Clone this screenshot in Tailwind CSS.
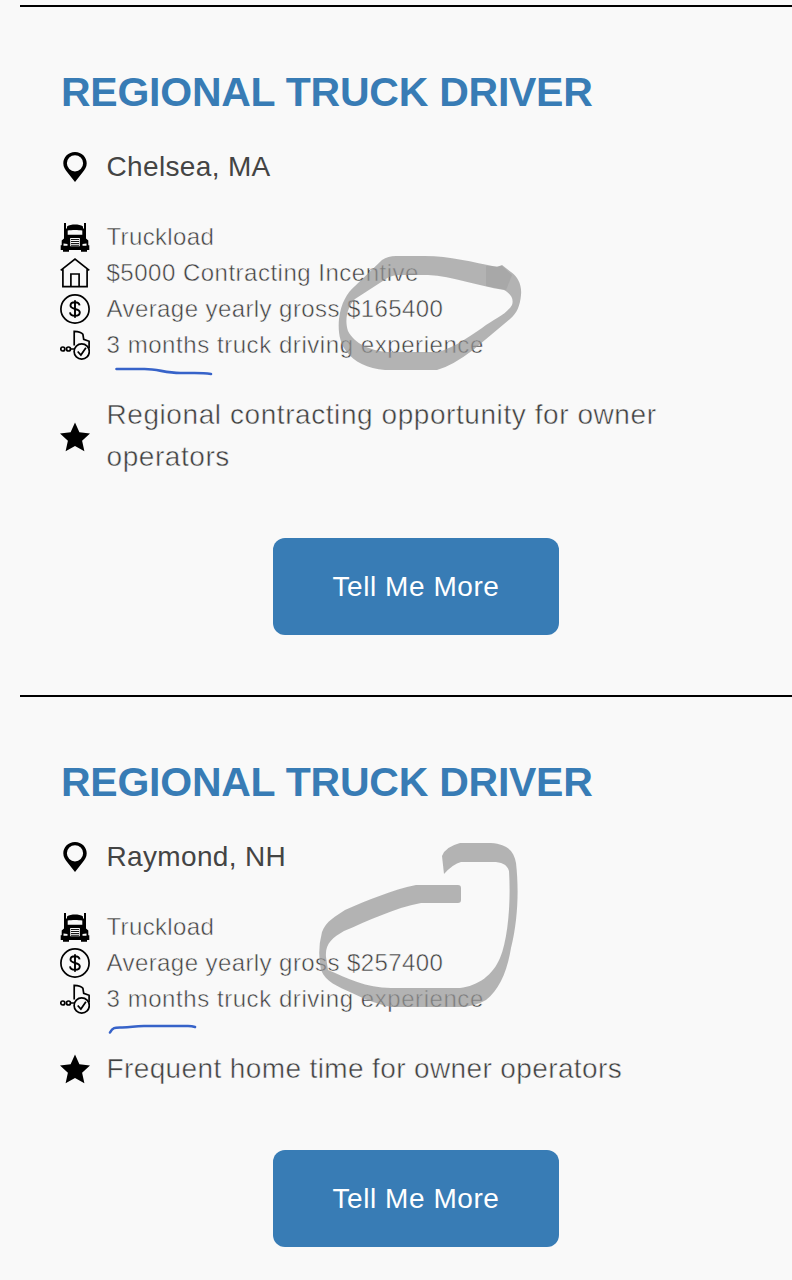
<!DOCTYPE html>
<html lang="en">
<head>
    <meta charset="UTF-8">
    <meta name="viewport" content="width=device-width, initial-scale=1.0">
    <title>Regional Truck Driver Jobs</title>
    <script src="https://cdn.jsdelivr.net/npm/@tailwindcss/browser@4"></script>
</head>
<body class="bg-[#f9f9f9] font-['Liberation_Sans',Arial,sans-serif]">
    <!-- Shared icons -->
    <svg class="hidden">
        <symbol id="pin" viewBox="0 0 30 30">
            <path fill-rule="evenodd" d="M15 0C8.300 0 3.300 5 3.300 11.300c0 3.900 1.900 6.400 4.400 9.500L15 30l7.300-9.200c2.500-3.100 4.400-5.600 4.400-9.500C26.700 5 21.700 0 15 0zm0 3.200a8.100 8.100 0 110 16.200 8.100 8.100 0 010-16.200z"/>
        </symbol>
        <symbol id="truck" viewBox="0 0 30 30">
            <path d="M4 1h2v5.500H7V4.500C9 3 12 2.600 15 2.600s6 .4 8 1.900v2H24V1h2v15.500l2.300 2v4.700H29.300V28H27v1.700H21V28H9v1.700H3V28H.7v-4.800h1v-4.700L4 16.500z"/>
            <path fill="#f9f9f9" d="M7.700 8.400c4-.7 10.600-.7 14.600 0v4.400H7.700zM10.200 16h9.600v8.300h-9.600zM3.500 21.500l4 .5v1.800h-4zM26.500 21.500l-4 .5v1.800h4z"/>
            <path stroke="#000" stroke-width=".9" d="M11 17.500h8M11 19.500h8M11 21.500h8M11 23.300h8"/>
        </symbol>
        <symbol id="house" viewBox="0 0 30 30">
            <path fill="none" stroke="#000" stroke-width="1.700" d="M.7 12.300L15 1.200l14.300 11.100M2.900 11v17.700h8V16h8.200v12.700h8V11M10.900 28.700h8.200"/>
        </symbol>
        <symbol id="dollar" viewBox="0 0 30 30">
            <circle cx="15" cy="15" r="14.100" fill="none" stroke="#000" stroke-width="1.700"/>
            <path fill="none" stroke="#000" stroke-width="1.900" d="M15 6.200v17.600M19.600 11.400c-.4-2-2-3.100-4.600-3.100-2.700 0-4.500 1.300-4.500 3.300 0 4.700 9.300 2 9.300 6.900 0 2-1.900 3.300-4.800 3.300s-4.700-1.300-5-3.500"/>
        </symbol>
        <symbol id="route" viewBox="0 0 30 30">
            <g fill="none" stroke="#000" stroke-width="1.700">
                <circle cx="2.800" cy="19" r="2"/>
                <circle cx="8.500" cy="19" r="2"/>
                <path d="M10.500 19h4M14.200 15.500V1.300c4.300.2 7.300 1.200 8.700 3l.8 5 5.400 2v7"/>
                <circle cx="21.700" cy="21.500" r="7.600"/>
                <path d="M17.700 21.500l3.200 3.600 5-7.400"/>
            </g>
        </symbol>
        <symbol id="star" viewBox="0 0 30 30">
            <path d="M15 .5l4.400 9.800 10.600 1.200-7.900 7.200 2.300 10.500L15 23.900l-9.400 5.300 2.300-10.500L0 11.500l10.600-1.200z"/>
        </symbol>
    </svg>

    <main class="relative h-[1280px] overflow-hidden pt-[5px] pl-5">
        <!-- Chelsea -->
        <section class="h-[690px] border-t-2 border-black pt-[61px] pl-10">
            <h2 class="h-12 pl-px text-[41px] leading-[48px] font-bold tracking-[-0.25px] whitespace-nowrap text-[#387cb5]">REGIONAL TRUCK DRIVER</h2>
            <div class="mt-[30px] flex h-[42px] items-center gap-[16.5px] text-[28px] tracking-[0.35px] text-[#444]">
                <svg class="size-[30px]"><use href="#pin"/></svg>
                <span>Chelsea, MA</span>
            </div>
            <ul class="mt-[30.5px] mb-[30.5px] text-2xl leading-[36px] tracking-[0.5px] text-[#404040] [-webkit-text-stroke:0.5px_#f9f9f9]">
                <li class="flex h-[36.25px] items-center gap-[16.5px] tracking-[0.35px]"><svg class="size-[30px]"><use href="#truck"/></svg>Truckload</li>
                <li class="flex h-[36.25px] items-center gap-[16.5px]"><svg class="size-[30px]"><use href="#house"/></svg>$5000 Contracting Incentive</li>
                <li class="flex h-[36.25px] items-center gap-[16.5px] tracking-[0.42px]"><svg class="size-[30px]"><use href="#dollar"/></svg>Average yearly gross $165400</li>
                <li class="flex h-[36.25px] items-center gap-[16.5px] tracking-[0.56px]"><svg class="size-[30px]"><use href="#route"/></svg>3 months truck driving experience</li>
            </ul>
            <div class="flex items-center gap-[16.5px] text-[28px] leading-[42px] tracking-[0.57px] text-[#404040] [-webkit-text-stroke:0.5px_#f9f9f9]">
                <svg class="mt-px size-[30px] shrink-0"><use href="#star"/></svg>
                <p class="w-[600px]">Regional contracting opportunity for owner operators</p>
            </div>
            <button class="mt-[60px] ml-[213px] block h-[97px] w-[286px] rounded-xl bg-[#387cb5] pt-px text-[28px] tracking-[0.55px] text-white">Tell Me More</button>
        </section>

        <!-- Raymond -->
        <section class="border-t-2 border-black pt-[61px] pl-10">
            <h2 class="h-12 pl-px text-[41px] leading-[48px] font-bold tracking-[-0.25px] whitespace-nowrap text-[#387cb5]">REGIONAL TRUCK DRIVER</h2>
            <div class="mt-[30px] flex h-[42px] items-center gap-[16.5px] text-[28px] tracking-[0.35px] text-[#444]">
                <svg class="size-[30px]"><use href="#pin"/></svg>
                <span>Raymond, NH</span>
            </div>
            <ul class="mt-[30.5px] mb-[30.5px] text-2xl leading-[36px] tracking-[0.5px] text-[#404040] [-webkit-text-stroke:0.5px_#f9f9f9]">
                <li class="flex h-[36.25px] items-center gap-[16.5px] tracking-[0.35px]"><svg class="size-[30px]"><use href="#truck"/></svg>Truckload</li>
                <li class="flex h-[36.25px] items-center gap-[16.5px] tracking-[0.42px]"><svg class="size-[30px]"><use href="#dollar"/></svg>Average yearly gross $257400</li>
                <li class="flex h-[36.25px] items-center gap-[16.5px] tracking-[0.56px]"><svg class="size-[30px]"><use href="#route"/></svg>3 months truck driving experience</li>
            </ul>
            <div class="flex items-center gap-[16.5px] text-[28px] leading-[42px] tracking-[0.38px] text-[#404040] [-webkit-text-stroke:0.5px_#f9f9f9]">
                <svg class="size-[30px] shrink-0"><use href="#star"/></svg>
                <p class="w-[600px]">Frequent home time for owner operators</p>
            </div>
            <button class="mt-[60px] ml-[213px] block h-[97px] w-[286px] rounded-xl bg-[#387cb5] pt-px text-[28px] tracking-[0.55px] text-white">Tell Me More</button>
        </section>

        <!-- Marker and pen strokes drawn over the cards -->
        <svg class="pointer-events-none absolute top-0 left-0 h-[1280px] w-[792px]" viewBox="0 0 792 1280">
            <g fill="#969696" fill-opacity=".7">
                <path fill-rule="evenodd" d="M382 260Q388 256 396 256H425C450 256 472 262 497 267L502 265L511 272C518 277 522 285 521 295C520 306 517 313 510 319L473 350Q452 366 437 370H385C368 369 353 361 347 352C339 343 338 330 339 319C341 303 347 293 355 286ZM389 277Q394 275 400 275H428C453 276 477 286 504 290C511 294 514 299 512 305C506 315 494 319 482 328C466 339 453 348 438 352H388C370 351 354 343 348 331C344 319 348 306 355 299Z"/>
                <path d="M444 874L442 856Q445 847 460 843H491C507 844 514 851 516 863C519 889 518 920 511 948C507 972 499 990 486 1000Q476 1006 461 1007H391Q372 1003 352 993C337 986 326 982 321 970Q317 951 322 932C326 921 336 916 345 910C368 900 392 890 416 885H458q3 0 3 3v12q0 3-3 3H421C394 908 368 921 344 931C332 938 325 944 326 957L328 970C347 978 366 988 391 988H460C478 986 493 975 500 958C508 939 511 902 509 871C507 864 501 862 493 862H461Q453 864 444 874Z"/>
            </g>
            <path fill="#888" fill-opacity=".25" d="M486 266L502 266L512 275L506 290L486 286Z"/>
            <g fill="none" stroke="#3763c9" stroke-width="2.600" stroke-linecap="round">
                <path d="M116.500 369h28c14 0 20 4 36 4 16 .3 20-.5 30.500 1"/>
                <path d="M110 1032.500c3-5.500 5-5 12-5 10 0 11-1.500 22-1.500h44q4 0 7 1"/>
            </g>
        </svg>
    </main>
</body>
</html>
